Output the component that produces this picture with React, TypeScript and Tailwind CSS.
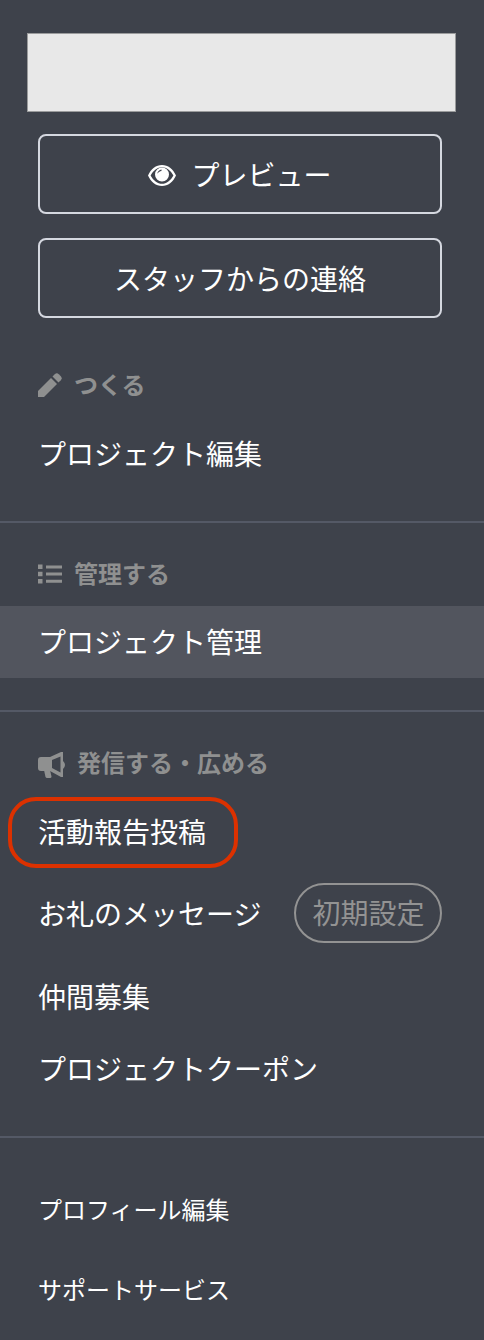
const font = { fontFamily: '"Noto Sans CJK JP", "Noto Sans", sans-serif' }

const EyeIcon = () => (
    <svg viewBox="0 0 28 21" className="mt-0.5 mr-[15px] h-[21px] w-7 fill-white">
        <path
            fillRule="evenodd"
            d="M14 0C8 0 3 4 0 10.500 3 17 8 21 14 21s11-4 14-10.500C25 4 20 0 14 0ZM14 2.200C9.500 2.200 5.300 5.400 2.600 10.500 5.300 15.600 9.500 18.800 14 18.800s8.700-3.200 11.400-8.300C22.700 5.400 18.500 2.200 14 2.200Z"
        />
        <path
            fillRule="evenodd"
            d="M14 2.500a7 7 0 1 0 0 14 7 7 0 0 0 0-14ZM13.500 4.500C11.300 4.800 9.500 6.500 9.200 8.800 10.300 7.300 11.700 6.200 13.500 5.900Z"
        />
    </svg>
)

const PencilIcon = () => (
    <svg viewBox="0 0 24 24" className="mr-[12px] h-6 w-6 fill-[#8f9090]">
        <path d="M0 24V18L13 5 19 11 6 24Z" />
        <path d="M14.500 3.500 16.800 1.200a3 3 0 0 1 4 0l2 2a3 3 0 0 1 0 4L20.500 9.500Z" />
    </svg>
)

const ListIcon = () => (
    <svg viewBox="0 0 24 20" className="mr-[12px] h-5 w-6 fill-[#8f9090]">
        <path d="M0 .500h4.500v4.500H0ZM8 1.500h16v3H8ZM0 7.700h4.500v4.500H0ZM8 8.500h16v3H8ZM0 15h4.500v4.500H0ZM8 15.700h16v3H8Z" />
    </svg>
)

const HornIcon = () => (
    <svg viewBox="0 0 27 26" className="mt-1 mr-[12px] h-[26px] w-[27px] fill-[#8f9090]">
        <path
            fillRule="evenodd"
            d="M3 5H12L23 0H25V9Q27 11 27 13 27 15 25 17V25H23L12 19H3Q0 19 0 16V8Q0 5 3 5ZM14 8V16L22.500 20.500V4.500Z"
        />
        <path d="M6 18H12L13.500 24.500Q13.500 26 12 26H9Q8 26 7.500 25Z" />
    </svg>
)

const SectionTitle: React.FC<{ icon: React.ReactNode; title: string; className?: string }> = ({ icon, title, className }) => (
    <div className={`flex h-8 items-center pl-[38px] text-[24px] leading-8 font-bold text-[#8f9090] ${className ?? ""}`}>
        {icon}
        <span className="mb-[3px]">{title}</span>
    </div>
)

const Item: React.FC<{ label: string; className?: string; children?: React.ReactNode }> = ({ label, className, children }) => (
    <div className={`relative flex h-[72px] items-center pb-0.5 pl-[38px] text-[28px] text-white ${className ?? ""}`}>
        {label}
        {children}
    </div>
)

const App: React.FC = () => {
    return (
        <div style={font} className="h-[1340px] w-[484px] overflow-hidden bg-[#3e424b]">
            <div className="pt-[33px] pl-[27px]">
                <div className="h-[79px] w-[429px] border border-[#9a9b9c] bg-[#e8e8e8]" />
            </div>
            <div className="mt-[22px] flex flex-col gap-6 pl-[38px]">
                <button className="flex h-20 w-[404px] items-center justify-center rounded-lg border-2 border-[#d5d8e0] text-[28px] text-white">
                    <EyeIcon />
                    プレビュー
                </button>
                <button className="flex h-20 w-[404px] items-center justify-center rounded-lg border-2 border-[#d5d8e0] text-[28px] text-white">
                    スタッフからの連絡
                </button>
            </div>

            <SectionTitle className="mt-[51px]" icon={<PencilIcon />} title="つくる" />
            <Item label="プロジェクト編集" className="mt-[17px]" />
            <div className="mt-[31px] h-0.5 bg-[#545966]" />

            <SectionTitle className="mt-[35px]" icon={<ListIcon />} title="管理する" />
            <Item label="プロジェクト管理" className="mt-4 bg-[#52555e]" />
            <div className="mt-8 h-0.5 bg-[#545966]" />

            <SectionTitle className="mt-[35px]" icon={<HornIcon />} title="発信する・広める" />
            <Item label="活動報告投稿" className="mt-[17px]">
                <div className="absolute top-px left-2 h-[71px] w-[230px] rounded-[28px] border-4 border-[#dc3100]" />
            </Item>
            <Item label="お礼のメッセージ" className="mt-[10px]">
                <span className="ml-[33px] flex h-[60px] w-[148px] items-center justify-center rounded-full border-2 border-[#939393] pb-0.5 text-[28px] text-[#939393]">
                    初期設定
                </span>
            </Item>
            <Item label="仲間募集" className="mt-[11px]" />
            <Item label="プロジェクトクーポン" />
            <div className="mt-[31px] h-0.5 bg-[#545966]" />

            <div className="mt-[31px] flex h-20 items-center pl-[38px] text-[24px] text-white">プロフィール編集</div>
            <div className="flex h-20 items-center pl-[38px] text-[24px] text-white">サポートサービス</div>
        </div>
    )
}

export default App
